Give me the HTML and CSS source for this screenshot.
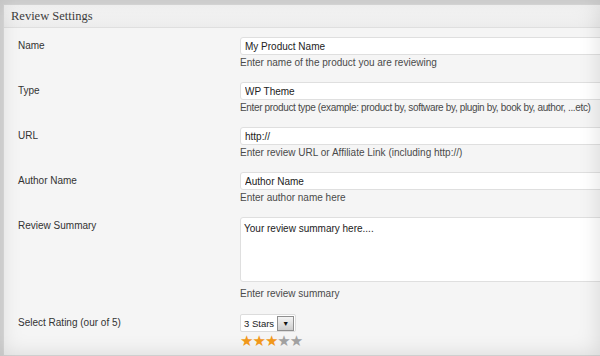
FILE: index.html
```html
<!DOCTYPE html>
<html lang="en">
<head>
    <meta charset="UTF-8">
    <meta name="viewport" content="width=device-width, initial-scale=1.0">
    <title>Review Settings</title>
    <link rel="stylesheet" href="styles.css">
</head>
<body>
    <div class="postbox">
        <h3 class="hndle">Review Settings</h3>
        <div class="inside">
            <div class="field-row">
                <label class="field-label">Name</label>
                <div class="field">
                    <input type="text" class="text-input" value="My Product Name">
                    <p class="description">Enter name of the product you are reviewing</p>
                </div>
            </div>
            <div class="field-row">
                <label class="field-label">Type</label>
                <div class="field">
                    <input type="text" class="text-input" value="WP Theme">
                    <p class="description tight">Enter product type (example: product by, software by, plugin by, book by, author, ...etc)</p>
                </div>
            </div>
            <div class="field-row">
                <label class="field-label">URL</label>
                <div class="field">
                    <input type="text" class="text-input" value="http://">
                    <p class="description">Enter review URL or Affiliate Link (including http://)</p>
                </div>
            </div>
            <div class="field-row">
                <label class="field-label">Author Name</label>
                <div class="field">
                    <input type="text" class="text-input" value="Author Name">
                    <p class="description">Enter author name here</p>
                </div>
            </div>
            <div class="field-row">
                <label class="field-label">Review Summary</label>
                <div class="field">
                    <textarea class="text-area">Your review summary here....</textarea>
                    <p class="description desc-gap">Enter review summary</p>
                </div>
            </div>
            <div class="field-row rating-row">
                <label class="field-label">Select Rating (our of 5)</label>
                <div class="field">
                    <div class="select-box">
                        <span>3 Stars</span>
                        <span class="select-arrow">&#9660;</span>
                    </div>
                    <div class="stars">
                        <span class="star on">&#9733;</span><span class="star on">&#9733;</span><span class="star on">&#9733;</span><span class="star">&#9733;</span><span class="star">&#9733;</span>
                    </div>
                </div>
            </div>
        </div>
    </div>
</body>
</html>
```

FILE: styles.css
```css
body {
    margin: 0;
    padding: 4px 0 0 3px;
    background: #d9d9d9;
    font-family: 'Liberation Sans', Arial, sans-serif;
    font-size: 10px;
    color: #333;
    height: 356px;
    box-sizing: border-box;
    overflow: hidden;
}

/* soft vignette around the screenshot */
body::after {
    content: "";
    position: fixed;
    top: 0;
    left: 0;
    right: 0;
    bottom: 0;
    pointer-events: none;
    box-shadow: inset 0 0 22px rgba(0, 0, 0, 0.13);
}

.postbox {
    background: #f5f5f5;
    border: 1px solid #dcdcdc;
    border-right: none;
    height: 100%;
    box-sizing: border-box;
}

.hndle {
    margin: 0;
    height: 22px;
    line-height: 22px;
    padding: 0 7px;
    font-family: 'Liberation Serif', 'Times New Roman', serif;
    font-size: 12.5px;
    font-weight: normal;
    color: #3e3e3e;
    background: linear-gradient(#f8f8f8, #ececec);
    border-bottom: 1px solid #dfdfdf;
}

.inside {
    padding: 3px 0 0 14px;
}

.field-row {
    display: grid;
    grid-template-columns: 222px 1fr;
    padding: 6px 0 7px;
}

.field-label {
    line-height: 18px;
    color: #333;
}

.field {
    min-width: 0;
}

.text-input,
.text-area {
    display: block;
    width: 400px;
    height: 18px;
    margin: 0;
    padding: 0 4px;
    box-sizing: border-box;
    border: 1px solid #dfdfdf;
    border-radius: 3px;
    background: #fff;
    font-family: 'Liberation Sans', Arial, sans-serif;
    font-size: 10px;
    color: #222;
    outline: none;
}

.text-area {
    height: 65px;
    padding: 5px 3px;
    resize: none;
}

.description {
    margin: 1px 0 0;
    line-height: 13px;
    white-space: nowrap;
    color: #4a4a4a;
}

.description.tight {
    letter-spacing: -0.35px;
}

.desc-gap {
    margin-top: 5px;
}

.rating-row {
    padding-top: 7px;
}

.select-box {
    display: flex;
    align-items: center;
    gap: 3px;
    width: fit-content;
    height: 18px;
    box-sizing: border-box;
    padding: 0 1px 0 3px;
    white-space: nowrap;
    background: #fff;
    border: 1px solid #dcdcdc;
    border-radius: 2px;
    font-size: 9.5px;
    color: #222;
}

.select-arrow {
    flex: none;
    width: 15px;
    height: 13px;
    line-height: 13px;
    text-align: center;
    font-size: 7px;
    color: #111;
    border: 1px solid #8f8f8f;
    background: linear-gradient(#f4f4f4, #cdcdcd);
}

.stars {
    margin-top: 2px;
    line-height: 14px;
    font-family: 'DejaVu Sans', sans-serif;
    font-size: 15px;
    letter-spacing: -1px;
    white-space: nowrap;
}

.star {
    color: #a3a3a3;
}

.star.on {
    color: #f39a1c;
}
```
